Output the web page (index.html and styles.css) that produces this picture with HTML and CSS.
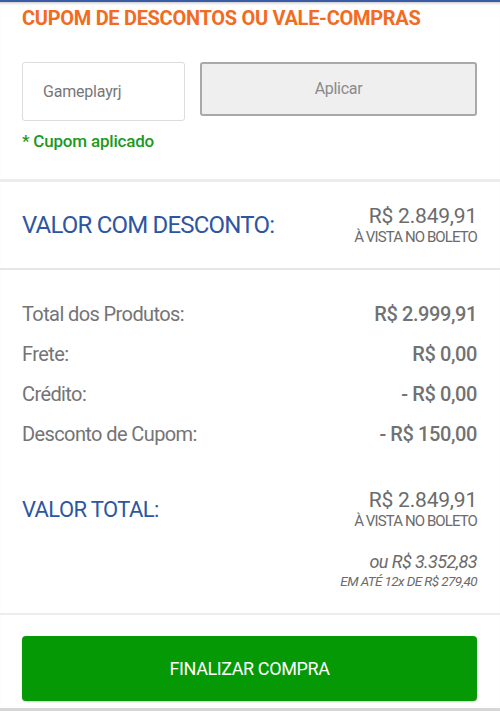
FILE: index.html
```html
<!DOCTYPE html>
<html lang="pt-BR">

<head>
   <meta charset="UTF-8">
   <meta name="viewport" content="width=device-width, initial-scale=1.0">
   <title>Resumo do pedido</title>
   <link rel="stylesheet" href="styles.css">
</head>

<body>
   <div class="coupon">
      <h2>CUPOM DE DESCONTOS OU VALE-COMPRAS</h2>
      <div class="coupon-form">
         <div class="coupon-input">Gameplayrj</div>
         <div class="coupon-btn">Aplicar</div>
      </div>
      <p class="coupon-msg">* Cupom aplicado</p>
   </div>

   <div class="highlight discount">
      <p class="highlight-label">VALOR COM DESCONTO:</p>
      <div class="highlight-price">
         <p class="price">R$ 2.849,91</p>
         <p class="price-note">À VISTA NO BOLETO</p>
      </div>
   </div>

   <div class="summary">
      <div class="row">
         <p>Total dos Produtos:</p>
         <p class="value">R$ 2.999,91</p>
      </div>
      <div class="row">
         <p>Frete:</p>
         <p class="value">R$ 0,00</p>
      </div>
      <div class="row">
         <p>Crédito:</p>
         <p class="value">- R$ 0,00</p>
      </div>
      <div class="row">
         <p>Desconto de Cupom:</p>
         <p class="value">- R$ 150,00</p>
      </div>

      <div class="highlight total">
         <p class="highlight-label">VALOR TOTAL:</p>
         <div class="highlight-price">
            <p class="price">R$ 2.849,91</p>
            <p class="price-note">À VISTA NO BOLETO</p>
         </div>
      </div>

      <div class="installments">
         <p class="inst-price">ou R$ 3.352,83</p>
         <p class="inst-note">EM ATÉ 12x DE R$ 279,40</p>
      </div>
   </div>

   <div class="checkout">
      <div class="checkout-btn">FINALIZAR COMPRA</div>
   </div>
</body>

</html>
```

FILE: styles.css
```css
* {
   margin: 0;
   padding: 0;
   box-sizing: border-box;
   font-family: Roboto, 'Liberation Sans', sans-serif;
}

body {
   background-color: #fff;
   color: #6b6b6b;
   border-top: 2px solid #3b5ca6;
   box-shadow: inset 0 3px 3px -2px rgba(0, 0, 0, 0.25);
   height: 712px;
   overflow: hidden;
}

.coupon {
   padding: 0 23px 0 22px;
   height: 177px;
}

.coupon h2 {
   color: #f26b1f;
   font-size: 20px;
   font-weight: 700;
   letter-spacing: -0.3px;
   line-height: 32px;
}

.coupon-form {
   display: flex;
   align-items: flex-start;
   gap: 15px;
   margin-top: 28px;
}

.coupon-input {
   width: 163px;
   height: 59px;
   border: 1px solid #dcdcdc;
   border-radius: 3px;
   padding-left: 20px;
   line-height: 57px;
   font-size: 16px;
   letter-spacing: -0.2px;
   color: #777;
}

.coupon-btn {
   flex: 1;
   height: 54px;
   background-color: #efefef;
   border: 2px solid #a9a9a9;
   border-radius: 3px;
   text-align: center;
   line-height: 50px;
   font-size: 16px;
   letter-spacing: -0.3px;
   color: #8a8a8a;
}

.coupon-msg {
   margin-top: 8px;
   color: #1c9a1c;
   font-size: 17px;
   font-weight: 500;
   letter-spacing: -0.2px;
   line-height: 24px;
}

.highlight {
   display: flex;
   justify-content: space-between;
   align-items: center;
}

.discount {
   border-top: 3px solid #ececec;
   border-bottom: 2px solid #e6e6e6;
   padding: 22px 23px 22px 22px;
}

.highlight-label {
   color: #2d56a1;
   font-size: 24px;
   letter-spacing: -0.8px;
}

.total .highlight-label {
   font-size: 22px;
   letter-spacing: -0.6px;
}

.highlight-price {
   text-align: right;
}

.price {
   font-size: 21px;
   line-height: 24px;
   letter-spacing: -0.2px;
}

.price-note {
   font-size: 15px;
   line-height: 18px;
   letter-spacing: -0.9px;
}

.summary {
   padding: 24px 23px 0 22px;
   height: 345px;
   border-bottom: 2px solid #ececec;
}

.row {
   display: flex;
   justify-content: space-between;
   font-size: 20px;
   line-height: 40px;
   letter-spacing: -0.6px;
   color: #747474;
}

.row .value {
   font-weight: 500;
   color: #727272;
   letter-spacing: -0.4px;
}

.total {
   margin-top: 34px;
}

.installments {
   text-align: right;
   font-style: italic;
   margin-top: 21px;
}

.inst-price {
   font-size: 18px;
   line-height: 22px;
   letter-spacing: -0.6px;
}

.inst-note {
   font-size: 13.5px;
   line-height: 16px;
   letter-spacing: -0.6px;
}

.checkout {
   padding: 21px 23px 0 22px;
   height: 96px;
   border-bottom: 3px solid #d6d6d6;
}

.checkout-btn {
   height: 65px;
   background-color: #069906;
   border-radius: 4px;
   box-shadow: 0 1px 2px rgba(0, 0, 0, 0.2);
   text-align: center;
   line-height: 65px;
   color: #fff;
   font-size: 18px;
   letter-spacing: -0.4px;
}
```
